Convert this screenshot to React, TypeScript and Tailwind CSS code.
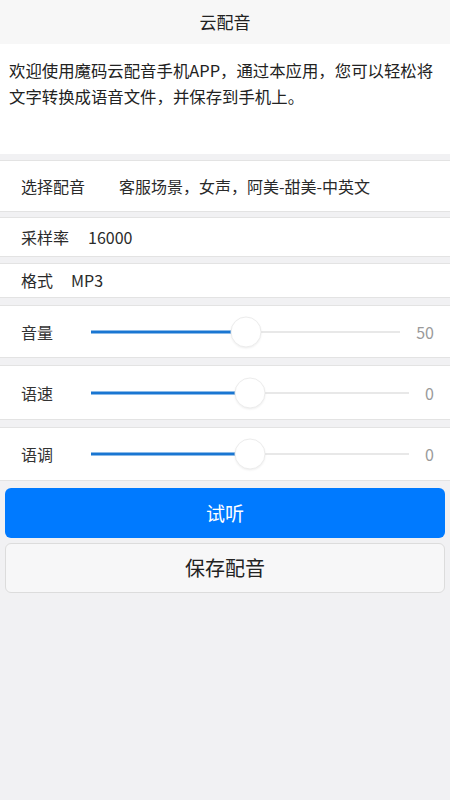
import React from "react";

const FONT = "font-['Noto_Sans_CJK_SC','Noto_Sans',sans-serif]";

function Slider({ label, value, pct }: { label: string; value: string; pct: number }) {
  return (
    <div className="flex items-center bg-white border-y border-[#e3e3e3] pl-[21px] pr-[16px]">
      <span className="w-[70px] shrink-0 text-[16px] text-[#333]">{label}</span>
      <div className="relative flex-1 h-[30px] flex items-center">
        <div className="h-[2px] w-full bg-[#e8e8e8]" />
        <div
          className="absolute left-0 top-1/2 -translate-y-1/2 h-[3px] bg-[#1976d2]"
          style={{ width: `${pct}%` }}
        />
        <div
          className="absolute top-1/2 -translate-y-1/2 -translate-x-1/2 w-[31px] h-[31px] rounded-full bg-white border border-[#ececec] shadow-[0_1px_2px_rgba(0,0,0,0.06)]"
          style={{ left: `${pct}%` }}
        />
      </div>
      <span className="ml-4 text-[16px] text-[#9a9a9a] text-right">{value}</span>
    </div>
  );
}

export default function App() {
  return (
    <div className={`${FONT} min-h-[800px] w-[450px] bg-[#f1f1f3] text-[#2a2a2a]`}>
      <div className="h-[44px] bg-[#f7f7f7] flex items-center justify-center text-[17px] text-[#222]">
        云配音
      </div>
      <div className="h-[110px] bg-white pl-[9px] pr-[4px] pt-[13px] text-[16.4px] leading-[26px] text-[#222]">
        欢迎使用魔码云配音手机APP，通过本应用，您可以轻松将文字转换成语音文件，并保存到手机上。
      </div>

      <div className="mt-[6px] h-[52px] bg-white border-y border-[#e3e3e3] flex items-center pl-[21px] text-[16px]">
        <span>选择配音</span>
        <span className="ml-[34px]">客服场景，女声，阿美-甜美-中英文</span>
      </div>
      <div className="mt-[5px] h-[40px] bg-white border-y border-[#e3e3e3] flex items-center pl-[21px] text-[16px]">
        <span>采样率</span>
        <span className="ml-[19px]">16000</span>
      </div>
      <div className="mt-[6px] h-[35px] bg-white border-y border-[#e3e3e3] flex items-center pl-[21px] text-[16px] pb-[2px]">
        <span>格式</span>
        <span className="ml-[18px]">MP3</span>
      </div>

      <div className="mt-[7px] flex flex-col gap-[7px]">
        <div className="h-[53px] flex flex-col [&>div]:h-full">
          <Slider label="音量" value="50" pct={50} />
        </div>
        <div className="h-[55px] flex flex-col [&>div]:h-full">
          <Slider label="语速" value="0" pct={50} />
        </div>
        <div className="h-[54px] flex flex-col [&>div]:h-full">
          <Slider label="语调" value="0" pct={50} />
        </div>
      </div>

      <div className="px-[5px] pt-[7px] flex flex-col gap-[5px]">
        <button className="h-[50px] w-full rounded-[6px] bg-[#007aff] text-white text-[19px]">
          试听
        </button>
        <button className="h-[50px] w-full rounded-[6px] bg-[#f7f7f8] border border-[#dcdcdc] text-[#222] text-[20px]">
          保存配音
        </button>
      </div>
    </div>
  );
}
